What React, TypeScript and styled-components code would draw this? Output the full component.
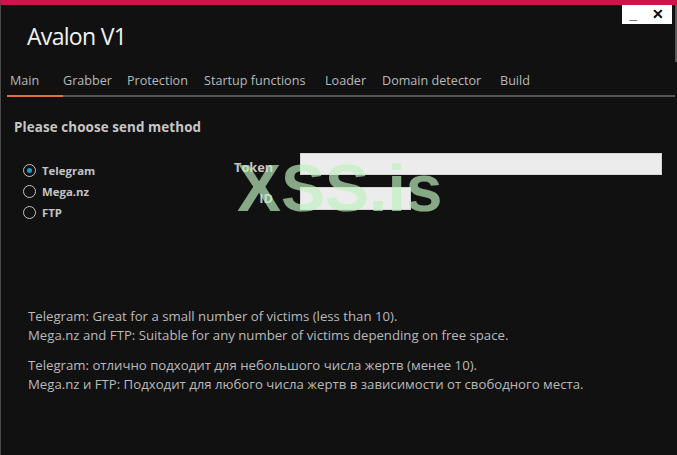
import styled, {createGlobalStyle} from "styled-components";

const Global = createGlobalStyle`
    html, body {
        margin: 0;
        padding: 0;
        background-color: #111111;
    }
    body {
        font-family: "Open Sans", "Liberation Sans", sans-serif;
    }
`;

const Window = styled.div`
    width: 677px;
    height: 455px;
    box-sizing: border-box;
    border-top: 5px solid #d0134a;
    border-left: 1px solid #4a4a4a;
    background-color: #111111;
    overflow: hidden;
    position: relative;
`;

const Header = styled.div`
    height: 57px;
    box-sizing: border-box;
    padding: 4px 0 0 26px;
    border-right: 2px solid #5a5a5a;
    display: flex;
    align-items: center;
`;

const Title = styled.h1`
    margin: 0;
    font-weight: 400;
    font-size: 23px;
    color: #f2f2f2;
    letter-spacing: -0.7px;
`;

const Controls = styled.div`
    position: absolute;
    top: 0;
    right: 5px;
    width: 50px;
    height: 19px;
    background-color: #ffffff;
    display: flex;
    align-items: center;
    justify-content: space-around;
    font-family: "Liberation Sans", sans-serif;
    font-weight: 700;
    color: #000;
    font-size: 14px;
`;

const ControlBtn = styled.span`
    line-height: 19px;
`;

const TabStrip = styled.div`
    display: flex;
    align-items: stretch;
    height: 35px;
    margin: 0 2px 0 6px;
    border-bottom: 2px solid #555555;
    box-sizing: border-box;
`;

const Tab = styled.div<{ $active?: boolean; $width: number }>`
    width: ${p => p.$width}px;
    flex: none;
    display: flex;
    align-items: center;
    box-sizing: border-box;
    padding: 4px 0 0 ${p => p.$active ? 3 : 0}px;
    font-size: 12.6px;
    color: #b9b9b9;
    white-space: nowrap;
    margin-bottom: -2px;
    border-bottom: 2px solid ${p => p.$active ? "#e2703a" : "transparent"};
`;

const Body = styled.div`
    position: relative;
    padding: 21px 0 0 13px;
`;

const Heading = styled.div`
    font-weight: 700;
    font-size: 13.4px;
    color: #c6c6c6;
    letter-spacing: 0.1px;
`;

const MethodRow = styled.div`
    display: flex;
    margin-top: 16px;
`;

const Radios = styled.div`
    display: flex;
    flex-direction: column;
    gap: 5px;
    padding-left: 9px;
    width: 211px;
    padding-top: 10px;
`;

const RadioItem = styled.label`
    display: flex;
    align-items: center;
    gap: 6px;
    font-weight: 700;
    font-size: 11.4px;
    color: #c4c4c4;
    height: 16px;
`;

const RadioDot = styled.span<{ $checked?: boolean }>`
    width: 11px;
    height: 11px;
    border-radius: 50%;
    border: 1px solid #c4c4c4;
    display: flex;
    align-items: center;
    justify-content: center;

    &::after {
        content: "";
        width: 5px;
        height: 5px;
        border-radius: 50%;
        background-color: ${p => p.$checked ? "#1d9bd4" : "transparent"};
    }
`;

const Fields = styled.div`
    display: grid;
    grid-template-columns: 66px 362px;
    grid-template-rows: 22px 23px;
    row-gap: 12px;
    align-items: center;
    margin-top: 1px;
`;

const FieldLabel = styled.span<{ $drop?: number }>`
    font-weight: 700;
    font-size: 12.8px;
    color: #c6c6c6;
    text-align: right;
    padding-right: 27px;
    position: relative;
    top: ${p => p.$drop ?? 0}px;
`;

const Input = styled.div<{ $width: number }>`
    width: ${p => p.$width}px;
    height: 100%;
    box-sizing: border-box;
    background-color: #ececec;
    border: 1px solid #d4d4d4;
`;

const Notes = styled.div`
    margin-top: 87px;
    padding-left: 14px;
    font-size: 13.2px;
    line-height: 19px;
    color: #bababa;
`;

const NoteBlock = styled.p`
    margin: 0 0 11px;
`;

const Watermark = styled.div`
    position: absolute;
    left: 236px;
    top: 58px;
    font-family: "Liberation Sans", Arial, sans-serif;
    font-weight: 700;
    font-size: 66px;
    line-height: 1;
    color: rgba(190, 240, 190, 0.68);
    pointer-events: none;
`;

const tabs = [
    {name: "Main", width: 56},
    {name: "Grabber", width: 64},
    {name: "Protection", width: 77},
    {name: "Startup functions", width: 121},
    {name: "Loader", width: 57},
    {name: "Domain detector", width: 118},
    {name: "Build", width: 60},
];

function App() {
    return <Window>
        <Global/>
        <Header>
            <Title>Avalon V1</Title>
        </Header>
        <Controls>
            <ControlBtn>_</ControlBtn>
            <ControlBtn>✕</ControlBtn>
        </Controls>

        <TabStrip>
            {tabs.map((t, i) =>
                <Tab key={t.name} $active={i === 0} $width={t.width}>{t.name}</Tab>
            )}
        </TabStrip>

        <Body>
            <Heading>Please choose send method</Heading>

            <MethodRow>
                <Radios>
                    <RadioItem><RadioDot $checked/>Telegram</RadioItem>
                    <RadioItem><RadioDot/>Mega.nz</RadioItem>
                    <RadioItem><RadioDot/>FTP</RadioItem>
                </Radios>
                <Fields>
                    <FieldLabel $drop={3}>Token</FieldLabel>
                    <Input $width={362}/>
                    <FieldLabel $drop={-1}>ID</FieldLabel>
                    <Input $width={111}/>
                </Fields>
            </MethodRow>

            <Notes>
                <NoteBlock>
                    Telegram: Great for a small number of victims (less than 10).<br/>
                    Mega.nz and FTP: Suitable for any number of victims depending on free space.
                </NoteBlock>
                <NoteBlock>
                    Telegram: отлично подходит для небольшого числа жертв (менее 10).<br/>
                    Mega.nz и FTP: Подходит для любого числа жертв в зависимости от свободного места.
                </NoteBlock>
            </Notes>

            <Watermark>XSS.is</Watermark>
        </Body>
    </Window>
}

export default App;
